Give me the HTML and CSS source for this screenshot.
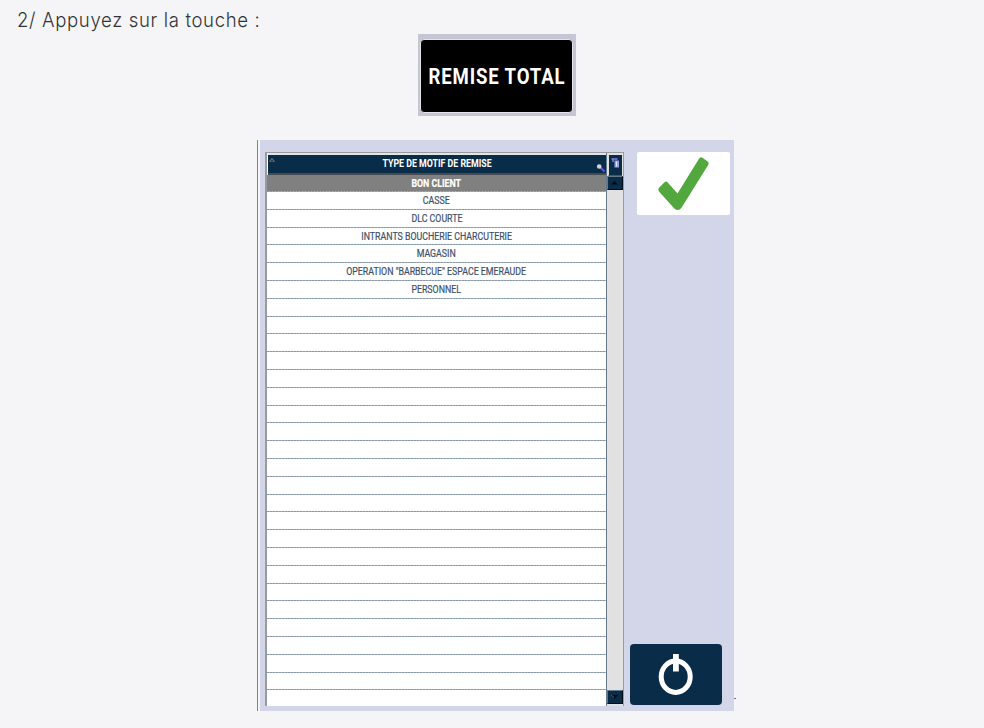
FILE: index.html
```html
<!DOCTYPE html>
<html lang="fr">
<head>
<meta charset="utf-8">
<title>Remise total</title>
<link rel="stylesheet" href="styles.css">
</head>
<body>
<p class="step"><span>2/ Appuyez sur la touche :</span></p>
<div class="key-frame"><div class="key"><span>REMISE TOTAL</span></div></div>
<main class="panel">
  <section class="list">
    <div class="table">
      <div class="head">
        <svg class="sort" width="6" height="5" viewBox="0 0 6 5"><path d="M0 4.500 3 1l3 3.500z" fill="#8b8780"/><path d="M1.500 4 3 2l1.500 2z" fill="#28313a"/></svg>
        <span class="label">TYPE DE MOTIF DE REMISE</span>
        <svg class="search" width="10" height="10" viewBox="0 0 10 10"><path d="m4.500 4.500 4 4" stroke="#5a5ee0" stroke-width="2"/><circle cx="3.200" cy="3.500" r="2.300" fill="#d8d4d0"/></svg>
      </div>
      <div class="rows">
        <div class="row selected"><span>BON CLIENT</span></div>
        <div class="row"><span>CASSE</span></div>
        <div class="row"><span>DLC COURTE</span></div>
        <div class="row"><span>INTRANTS BOUCHERIE CHARCUTERIE</span></div>
        <div class="row"><span>MAGASIN</span></div>
        <div class="row"><span>OPERATION "BARBECUE" ESPACE EMERAUDE</span></div>
        <div class="row"><span>PERSONNEL</span></div>
        <div class="row"></div><div class="row"></div><div class="row"></div><div class="row"></div>
        <div class="row"></div><div class="row"></div><div class="row"></div><div class="row"></div>
        <div class="row"></div><div class="row"></div><div class="row"></div><div class="row"></div>
        <div class="row"></div><div class="row"></div><div class="row"></div><div class="row"></div>
        <div class="row"></div><div class="row"></div><div class="row"></div><div class="row"></div>
        <div class="row"></div><div class="row"></div>
      </div>
    </div>
    <div class="scroll">
      <div class="tool"><svg width="12" height="16" viewBox="0 0 12 16"><path d="M1.500 4h6M3 4v3" stroke="#8080dc" stroke-width="1.500" fill="none"/><path d="M4.500 5.500h4.500V12.500H4.500z" fill="#9a9ee8"/><path d="M6.500 6.500v5" stroke="#e4e6ff"/></svg></div>
      <div class="arrow"><svg width="13" height="11" viewBox="0 0 13 11"><path d="M3 7.500 6.500 4 10 7.500z" fill="#020a12"/></svg></div>
      <div class="track"></div>
      <div class="arrow"><svg width="13" height="11" viewBox="0 0 13 11"><path d="M3 4h7L6.500 8z" fill="#020a12"/><path d="m3 4 3 2.500" stroke="#65727c" stroke-width=".8"/></svg></div>
    </div>
  </section>
  <aside class="actions">
    <div class="ok"><svg width="93" height="63" viewBox="0 0 93 63"><path d="M21.800 36 27.500 30.300Q29 28.800 30.500 30.300L40.500 41.500 62.300 6.300Q63.500 4.700 65.500 5.800L70.700 9.500Q72.500 11 71.300 12.800L44.500 55.700Q41.500 59.500 37.500 56.700L22 39.500Q20.500 37.500 21.800 36z" fill="#52a83e"/></svg></div>
    <div class="power"><svg width="92" height="61" viewBox="0 0 92 61"><ellipse cx="45.700" cy="32.700" rx="14.500" ry="15.700" fill="none" stroke="#fff" stroke-width="5"/><path d="M43 10h5.800V27.500H43z" fill="#fff"/></svg></div>
  </aside>
  <i class="tick"></i>
</main>
</body>
</html>
```
FILE: styles.css
```css
* { box-sizing: border-box; }
body {
  margin: 0;
  height: 728px;
  overflow: hidden;
  background: #f5f5f7;
  font-family: Roboto, "Liberation Sans", sans-serif;
}
svg { display: block; }
.step {
  margin: 0;
  height: 34px;
  padding: 8px 0 0 17px;
  font: 300 20px/24px Inter, sans-serif;
  color: #333438;
}
.step span {
  display: inline-block;
  letter-spacing: .700px;
  transform: scaleX(.928);
  transform-origin: left;
  white-space: nowrap;
}
.key-frame {
  width: 158px;
  height: 82px;
  margin: 0 0 24px 418px;
  padding: 5px 3px 3px 2px;
  background: #c5c6d3;
}
.key {
  display: flex;
  align-items: center;
  justify-content: center;
  height: 74px;
  border: 1px solid #e3e3e8;
  border-radius: 4px;
  background: #000;
  color: #fff;
  font-size: 22px;
  font-weight: 700;
  white-space: nowrap;
}
.key span { letter-spacing: 1px; transform: scaleX(.845); }
.panel {
  position: relative;
  display: flex;
  width: 477px;
  height: 571px;
  margin-left: 257px;
  padding: 12px 0 0 7px;
  border-left: 1px solid #85827f;
  background: linear-gradient(90deg, #f6f5f7 2px, #d3d5e8 2px);
}
.list {
  display: flex;
  flex: none;
  width: 359px;
  height: 554px;
  border: solid #999b9e;
  border-width: 1px 1px 0 2px;
  background: #fff;
}
.table { width: 340px; flex: none; border-right: 1px solid #66788a; }
.head {
  position: relative;
  height: 22px;
  margin-left: 1px;
  border-top: 2px solid #e2e6e6;
  border-bottom: 2px solid #474b50;
  background: #092c49;
  color: #fff;
  text-align: center;
  font-size: 10px;
  font-weight: 700;
  line-height: 18px;
  white-space: nowrap;
}
.label { display: inline-block; transform: scaleX(.88); }
.sort { position: absolute; left: 1px; top: 2px; }
.search { position: absolute; right: 0; top: 8px; }
.row {
  height: 17.800px;
  background: repeating-linear-gradient(90deg, #8799aa 0 2px, #a9b5c1 2px 3px) bottom / 100% 1px no-repeat;
  color: #3c506a;
  text-align: center;
  font-size: 10px;
  line-height: 18.400px;
  white-space: nowrap;
}
.row span { display: inline-block; -webkit-text-stroke: .2px currentColor; transform: scaleX(.88); }
.row.selected { height: 17px; line-height: 18px; background-color: #808080; color: #fff; font-weight: 700; }
.scroll { display: flex; flex-direction: column; width: 16px; padding-bottom: 2px; background: #e1e1e1; }
.tool { height: 21px; margin: 2px 1px 0; border-left: 1px solid #ddd; background: #092c49; padding-left: 1px; border-bottom: 1px solid #455663; }
.arrow { height: 14px; border: 1px solid #020b14; border-top-color: #637989; border-left-color: #637989; background: #092c49; }
.track { flex: 1; }
.actions {
  display: flex;
  flex-direction: column;
  justify-content: space-between;
  width: 101px;
  height: 553px;
  margin-left: 6px;
}
.ok { width: 93px; height: 63px; margin-left: 7px; border-radius: 2px; background: #fff; }
.power { width: 92px; height: 61px; border-radius: 4px; background: #092c49; }
.tick { position: absolute; left: 476px; bottom: 12px; width: 2px; height: 1px; background: #6c6aa8; }
```
